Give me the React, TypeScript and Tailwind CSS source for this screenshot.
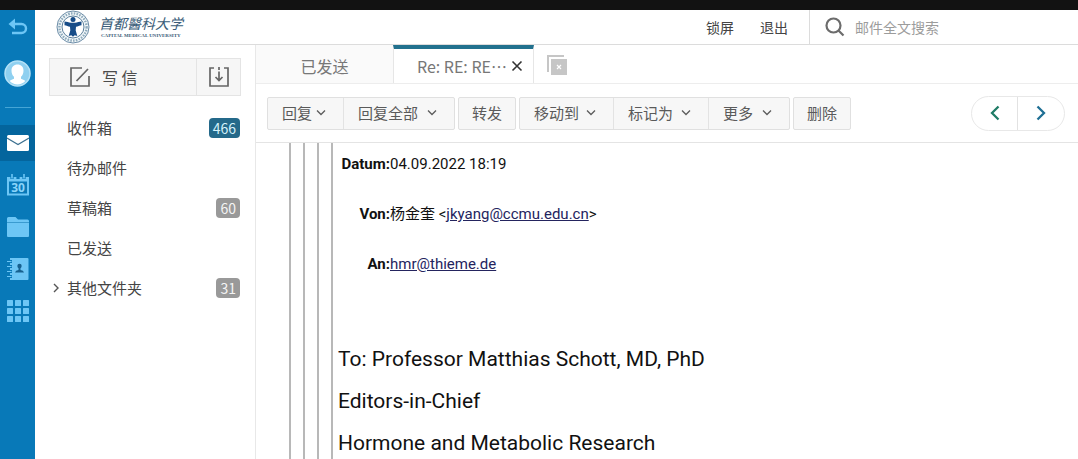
import type { ReactNode } from "react";

function Chevron() {
  return (
    <svg className="h-2 w-3 shrink-0" viewBox="0 0 12 8" fill="none" stroke="#5c5c5c" strokeWidth="1.3" aria-hidden="true">
      <path d="M2 1.500l4 4 4-4" />
    </svg>
  );
}

function Emblem() {
  return (
    <svg className="h-[34px] w-[34px] shrink-0" viewBox="0 0 34 34" aria-hidden="true">
      <circle cx="17" cy="17" r="16" fill="#f3f8fa" stroke="#6a8ba6" strokeWidth="1" />
      <circle cx="17" cy="17" r="13.6" fill="none" stroke="#8fabbd" strokeWidth="2.4" strokeDasharray="1.6 1.2" />
      <circle cx="17" cy="17" r="11" fill="#fff" stroke="#5b7f9c" strokeWidth="1" />
      <circle cx="17" cy="9.600" r="2.500" fill="#174c88" />
      <path d="M8.500 11.500c2.400 0 4 1.200 6.500 1.300h4c2.500-.1 4.100-1.300 6.500-1.300v3.700c-2.200.2-3.500 1.300-5.500 1.600l-.3 3.700 1.600 5.500-2.600-.8-1.700 1.500-1.700-1.500-2.600.8 1.600-5.500-.3-3.700c-2-.3-3.300-1.400-5.500-1.600z" fill="#174c88" />
    </svg>
  );
}

function RailButton({ label, active, children }: { label: string; active?: boolean; children: ReactNode }) {
  return (
    <button
      type="button"
      aria-label={label}
      className={
        active
          ? "flex h-9 w-full items-center justify-center bg-[#04659d]"
          : "flex h-9 w-full items-center justify-center"
      }
    >
      {children}
    </button>
  );
}

function Rail() {
  return (
    <nav className="flex w-[35px] shrink-0 flex-col items-center bg-[#0879b8]">
      <RailButton label="返回">
        <svg className="h-[22px] w-[22px]" viewBox="0 0 22 22" fill="none" aria-hidden="true">
          <path d="M6 7h8.500a4.500 4.500 0 0 1 0 9H5" stroke="#6dc6f5" strokeWidth="2.400" />
          <path d="M1.500 7l6.500-5.500v11z" fill="#6dc6f5" />
        </svg>
      </RailButton>
      <button type="button" aria-label="用户" className="mt-3.5">
        <svg className="h-[27px] w-[27px]" viewBox="0 0 27 27" aria-hidden="true">
          <circle cx="13.500" cy="13.500" r="12.500" fill="#8fd0f0" stroke="#b5e2f7" strokeWidth="1.500" />
          <path d="M13.500 4.500c3.700 0 6 2.500 6 6 0 3-1 5-2.500 6.300v2c1.500.6 3.200 1.100 4.300 2.200-2 2.200-4.800 3.600-7.800 3.600s-5.800-1.400-7.800-3.600c1.100-1.100 2.800-1.600 4.300-2.200v-2c-1.500-1.300-2.500-3.300-2.500-6.300 0-3.500 2.300-6 6-6z" fill="#fff" />
        </svg>
      </button>
      <div className="mt-5 mb-[17px] h-px w-[26px] bg-[#45a5d6]" />
      <div className="flex w-full flex-col gap-1.5">
        <RailButton label="邮件" active>
          <svg className="h-4 w-[22px]" viewBox="0 0 22 16" aria-hidden="true">
            <rect width="22" height="16" rx="1.500" fill="#fff" />
            <path d="M0 3l11 6.500L22 3" fill="none" stroke="#3c7090" strokeWidth="1.100" />
          </svg>
        </RailButton>
        <RailButton label="日历">
          <svg className="h-[22px] w-[22px]" viewBox="0 0 22 22" aria-hidden="true">
            <path d="M0 3h22v18.500H0z" fill="#6dc6f5" />
            <path d="M2 7.500h18v12H2z" fill="#0879b8" />
            <path d="M5 0v5M11 2v3M17 0v5" stroke="#0879b8" strokeWidth="3.200" />
            <path d="M5 0v4.500M17 0v4.500" stroke="#6dc6f5" strokeWidth="1.600" />
            <text x="11" y="18" textAnchor="middle" fontSize="12" fontWeight="700" fontFamily="Noto Sans, sans-serif" fill="#8ad4fa">30</text>
          </svg>
        </RailButton>
        <RailButton label="文件">
          <svg className="h-5 w-[22px]" viewBox="0 0 22 20" aria-hidden="true">
            <path d="M0 1.500Q0 0 1.500 0h7l2.500 2.500h9.500Q22 2.500 22 4v15q0 1-1 1H1q-1 0-1-1z" fill="#6dc6f5" />
            <path d="M0 5.500h22" stroke="#3a9bd0" strokeWidth="1" />
          </svg>
        </RailButton>
        <RailButton label="通讯录">
          <svg className="h-[22px] w-[22px]" viewBox="0 0 22 22" aria-hidden="true">
            <path d="M3 0h17.500q1 0 1 1v20q0 1-1 1H3z" fill="#6dc6f5" />
            <path d="M0 3.500h5M0 8.500h5M0 13.500h5M0 18.500h5" stroke="#0879b8" strokeWidth="3" />
            <path d="M0 3.500h4.500M0 8.500h4.500M0 13.500h4.500M0 18.500h4.500" stroke="#6dc6f5" strokeWidth="1.200" />
            <circle cx="12.500" cy="8" r="2.200" fill="#17618f" />
            <path d="M11.500 9h2v3q3 .3 3.500 2.500H8q.5-2.200 3.500-2.500z" fill="#17618f" />
          </svg>
        </RailButton>
        <RailButton label="应用">
          <svg className="h-[22px] w-[22px]" viewBox="0 0 22 22" fill="#6dc6f5" aria-hidden="true">
            {[0, 8, 16].map((y) =>
              [0, 8, 16].map((x) => <rect key={`${x}-${y}`} x={x} y={y} width="6" height="6" rx="0.500" />),
            )}
          </svg>
        </RailButton>
      </div>
    </nav>
  );
}

const folders = [
  { name: "收件箱", count: 466, unread: true },
  { name: "待办邮件" },
  { name: "草稿箱", count: 60 },
  { name: "已发送" },
  { name: "其他文件夹", count: 31, nested: true },
];

function Sidebar() {
  return (
    <aside className="w-[221px] shrink-0 border-r border-[#e8e8e8] px-3.5 pt-[13px]">
      <div className="flex h-[38px] border border-[#e4e4e4] bg-[#f6f6f6] text-[#4c4c4c]">
        <button type="button" className="flex flex-1 items-center gap-3 pl-5 text-base">
          <svg className="h-5 w-5" viewBox="0 0 20 20" fill="none" stroke="#666" strokeWidth="1.700" aria-hidden="true">
            <path d="M12 1H1v18h18V9M6.500 14L18 2" />
          </svg>
          写 信
        </button>
        <button type="button" aria-label="收信" className="flex w-11 items-center justify-center border-l border-[#e4e4e4]">
          <svg className="h-5 w-5" viewBox="0 0 20 20" fill="none" stroke="#666" strokeWidth="1.700" aria-hidden="true">
            <path d="M5 1H1v18h18V1h-4" />
            <path d="M10 0v3M10 4.500V13M6.500 10l3.500 3.500 3.500-3.500" />
          </svg>
        </button>
      </div>
      <ul className="mt-3 text-[15px] text-[#444]">
        {folders.map((f) => (
          <li key={f.name}>
            <a href="#" className="flex h-10 items-center pr-px">
              <span className="flex w-[18px] items-center pl-1">
                {f.nested && (
                  <svg className="h-[10px] w-[7px]" viewBox="0 0 7 10" fill="none" stroke="#555" strokeWidth="1.400" aria-hidden="true">
                    <path d="M1 1l4 4-4 4" />
                  </svg>
                )}
              </span>
              <span className="flex-1">{f.name}</span>
              {f.count && (
                <span
                  className={
                    f.unread
                      ? "rounded bg-[#24698a] px-1 text-sm leading-5 text-[#d5f2fb]"
                      : "rounded bg-[#999] px-1 text-sm leading-5 text-[#f4f4f4]"
                  }
                >
                  {f.count}
                </span>
              )}
            </a>
          </li>
        ))}
      </ul>
    </aside>
  );
}

function Header() {
  return (
    <header className="flex h-[35px] shrink-0 border-b border-[#dcdcdc]">
      <div className="flex flex-1 items-center gap-[9px] pl-[21px]">
        <Emblem />
        <div className="text-[#3a5c78]">
          <div className="text-sm leading-[18px] italic">首都醫科大学</div>
          <div className="pl-0.5 font-['Liberation_Serif',serif] text-[5px] leading-[8px] font-bold">CAPITAL MEDICAL UNIVERSITY</div>
        </div>
      </div>
      <div className="flex items-center gap-[26px] pr-[21px] text-sm text-[#444]">
        <a href="#">锁屏</a>
        <a href="#">退出</a>
      </div>
      <label className="flex w-[269px] items-center gap-2.5 border-l border-[#dcdcdc] pl-[15px]">
        <svg className="h-5 w-5 shrink-0" viewBox="0 0 20 20" fill="none" stroke="#6c6c6c" strokeWidth="2.200" aria-hidden="true">
          <circle cx="8.500" cy="8.500" r="7" />
          <path d="M13.500 13.500l5 5" />
        </svg>
        <input
          type="search"
          aria-label="邮件全文搜索"
          placeholder="邮件全文搜索"
          className="w-full bg-transparent text-sm outline-none placeholder:text-[#9c9c9c]"
        />
      </label>
    </header>
  );
}

function Tabs() {
  return (
    <div className="flex h-[39px] shrink-0 border-b border-[#ededed] text-base text-[#777]">
      <button type="button" className="w-[137px] bg-[#fafafa] pt-1">已发送</button>
      <div className="flex w-[141px] items-center justify-end gap-1 border-x border-t-4 border-x-[#e6e6e6] border-t-[#22718e] pr-2.5">
        <button type="button">Re: RE: RE…</button>
        <button type="button" aria-label="关闭">
          <svg className="h-3 w-3" viewBox="0 0 12 12" stroke="#333" strokeWidth="1.600" aria-hidden="true">
            <path d="M1.500 1.500l9 9M10.500 1.500l-9 9" />
          </svg>
        </button>
      </div>
      <button type="button" aria-label="关闭全部" className="pt-0.5 pl-[13px]">
        <svg className="h-5 w-5" viewBox="0 0 20 20" fill="none" aria-hidden="true">
          <path d="M1 17V1h16" stroke="#c6c6c6" strokeWidth="2" />
          <path d="M4 4h16v16H4z" fill="#c6c6c6" />
          <path d="M10 10l4 4M14 10l-4 4" stroke="#fff" strokeWidth="1.200" />
        </svg>
      </button>
    </div>
  );
}

function Tool({ label, menu, width }: { label: string; menu?: boolean; width: string }) {
  return (
    <button type="button" className={`flex items-center ${menu ? "justify-between pr-4 pl-3.5" : "justify-center"} ${width}`}>
      {label}
      {menu && <Chevron />}
    </button>
  );
}

function ToolGroup({ children }: { children: ReactNode }) {
  return (
    <div className="flex h-[33px] divide-x divide-[#e3e3e3] rounded-xs border border-[#e0e0e0] bg-[#f7f7f7]">
      {children}
    </div>
  );
}

function Toolbar() {
  return (
    <div className="flex h-[59px] shrink-0 items-center justify-between border-b border-[#e4e4e4] pr-[13px] pl-[11px] text-[15px] text-[#5a5a5a]">
      <div className="flex gap-[3px]">
        <ToolGroup>
          <Tool label="回复" menu width="w-[76px]" />
          <Tool label="回复全部" menu width="w-[110px]" />
        </ToolGroup>
        <ToolGroup>
          <Tool label="转发" width="w-14" />
        </ToolGroup>
        <ToolGroup>
          <Tool label="移动到" menu width="w-[94px]" />
          <Tool label="标记为" menu width="w-[95px]" />
          <Tool label="更多" menu width="w-20" />
        </ToolGroup>
        <ToolGroup>
          <Tool label="删除" width="w-14" />
        </ToolGroup>
      </div>
      <div className="flex h-[35px] divide-x divide-[#e2e2e2] rounded-full border border-[#e8e8e8]">
        <button type="button" aria-label="上一封" className="flex w-[46px] items-center justify-center">
          <svg className="h-4 w-[10px]" viewBox="0 0 10 16" fill="none" stroke="#1f7c66" strokeWidth="2.300" aria-hidden="true">
            <path d="M8.500 1.500L2 8l6.500 6.500" />
          </svg>
        </button>
        <button type="button" aria-label="下一封" className="flex w-[46px] items-center justify-center">
          <svg className="h-4 w-[10px]" viewBox="0 0 10 16" fill="none" stroke="#1f6f94" strokeWidth="2.300" aria-hidden="true">
            <path d="M1.500 1.500L8 8l-6.500 6.500" />
          </svg>
        </button>
      </div>
    </div>
  );
}

function Message() {
  return (
    <article className="flex min-h-0 flex-1 overflow-hidden pl-[33px] font-[Roboto,'Noto_Sans_CJK_SC',sans-serif] text-[#111]">
      <div className="flex shrink-0 gap-3 pr-[5px]">
        {[1, 2, 3, 4].map((n) => (
          <div key={n} className="w-0.5 bg-[#b8b8b8]" />
        ))}
      </div>
      <div>
        <dl className="grid grid-cols-[52px_auto] gap-y-[26px] pt-[9px] text-[15px] leading-6">
          <dt className="text-right font-bold">Datum:</dt>
          <dd>04.09.2022 18:19</dd>
          <dt className="text-right font-bold">Von:</dt>
          <dd>
            杨金奎 &lt;<a href="mailto:jkyang@ccmu.edu.cn" className="text-[#24245e] underline">jkyang@ccmu.edu.cn</a>&gt;
          </dd>
          <dt className="text-right font-bold">An:</dt>
          <dd>
            <a href="mailto:hmr@thieme.de" className="text-[#24245e] underline">hmr@thieme.de</a>
          </dd>
        </dl>
        <div className="mt-[62px] text-[21px] leading-[42px]">
          <p>To: Professor Matthias Schott, MD, PhD</p>
          <p>Editors-in-Chief</p>
          <p>Hormone and Metabolic Research</p>
        </div>
      </div>
    </article>
  );
}

export default function App() {
  return (
    <div lang="zh-CN" className="flex h-screen flex-col overflow-hidden bg-white font-['Noto_Sans_CJK_SC',sans-serif]">
      <div className="h-[10px] shrink-0 bg-[#121212]" />
      <div className="flex min-h-0 flex-1">
        <Rail />
        <div className="flex min-w-0 flex-1 flex-col">
          <Header />
          <div className="flex min-h-0 flex-1">
            <Sidebar />
            <main className="flex min-w-0 flex-1 flex-col">
              <Tabs />
              <Toolbar />
              <Message />
            </main>
          </div>
        </div>
      </div>
    </div>
  );
}
